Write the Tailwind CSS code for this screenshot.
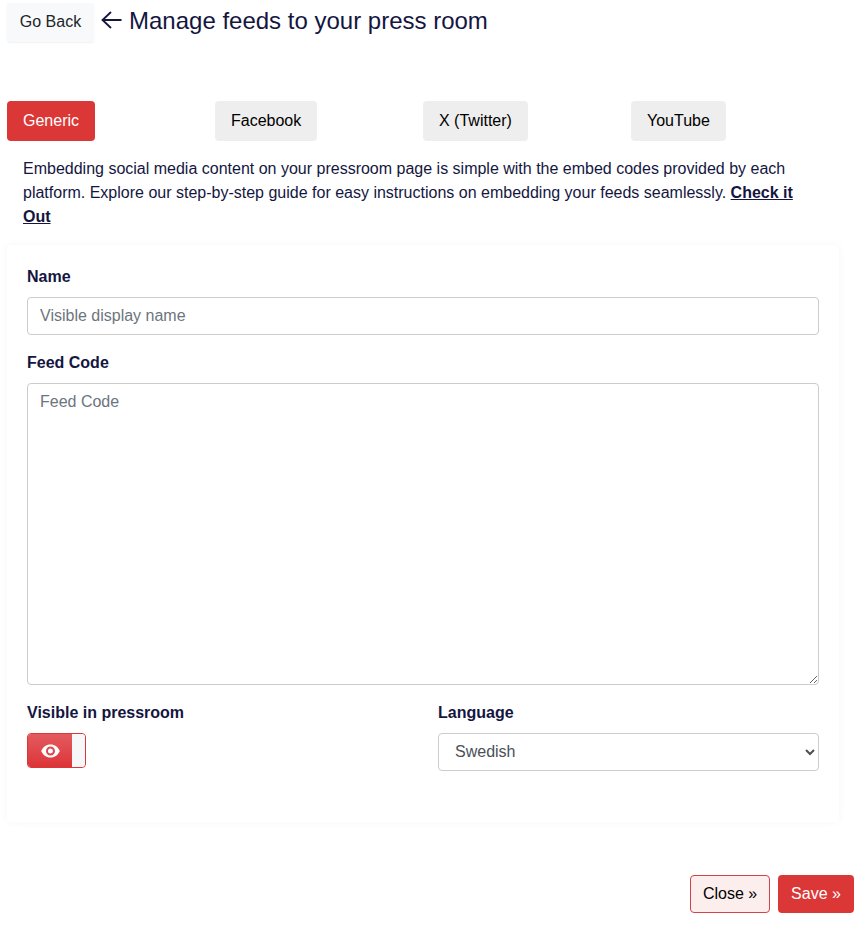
<!DOCTYPE html>
<html lang="en">
<head>
    <meta charset="UTF-8">
    <meta name="viewport" content="width=device-width, initial-scale=1.0">
    <title>Manage feeds</title>
    <script src="https://cdn.jsdelivr.net/npm/@tailwindcss/browser@4"></script>
</head>
<body class="bg-white text-[#14163f] font-['Liberation_Sans',Arial,sans-serif] h-[925px] overflow-hidden">

    <!-- header -->
    <div class="flex items-start pl-[7px] pt-[3px]">
        <button class="w-[87px] h-[39px] pb-[2px] bg-[#f8f9fa] rounded-[3px] shadow-[0_1px_2px_rgba(0,0,0,0.06)] text-[16px] text-[#212529]">Go Back</button>
        <svg class="ml-[7px] mt-[7px]" width="21" height="20" viewBox="0 0 21 20" fill="none" stroke="#14163f" stroke-width="1.8">
            <path d="M20.5 10H1.5M10 2L1.5 10L10 18"/>
        </svg>
        <h1 class="ml-[7px] text-[24px] leading-[36px]">Manage feeds to your press room</h1>
    </div>

    <!-- tabs -->
    <div class="grid grid-cols-4 w-[832px] ml-[7px] mt-[59px] text-[16px]">
        <div><button class="h-[40px] px-[16px] rounded-[4px] bg-[#dc3737] text-white">Generic</button></div>
        <div><button class="h-[40px] px-[16px] rounded-[4px] bg-[#eeeeee] text-black">Facebook</button></div>
        <div><button class="h-[40px] px-[16px] rounded-[4px] bg-[#eeeeee] text-black">X (Twitter)</button></div>
        <div><button class="h-[40px] px-[16px] rounded-[4px] bg-[#eeeeee] text-black">YouTube</button></div>
    </div>

    <p class="mt-[16px] ml-[23px] w-[800px] text-[16px] leading-[24px]">Embedding social media content on your pressroom page is simple with the embed codes provided by each platform. Explore our step-by-step guide for easy instructions on embedding your feeds seamlessly. <a href="#" class="font-bold underline">Check it Out</a></p>

    <!-- form card -->
    <div class="w-[832px] h-[577px] ml-[7px] mt-[16px] px-[20px] pt-[20px] rounded-[4px] shadow-[0_0_8px_rgba(0,0,0,0.04)]">
        <label class="block font-bold text-[16px] leading-[24px] mb-[8px]">Name</label>
        <input type="text" placeholder="Visible display name" class="block w-full h-[38px] px-[12px] text-[16px] border border-[#cccccc] rounded-[4px] placeholder:text-[#6c757d]">

        <label class="block font-bold text-[16px] leading-[24px] mt-[16px] mb-[8px]">Feed Code</label>
        <textarea placeholder="Feed Code" class="block w-full h-[302px] px-[12px] py-[6px] text-[16px] leading-[24px] border border-[#cccccc] rounded-[4px] placeholder:text-[#6c757d]"></textarea>

        <div class="flex mt-[16px]">
            <div class="w-[411px]">
                <label class="block font-bold text-[16px] leading-[24px] mb-[8px]">Visible in pressroom</label>
                <div class="flex w-[59px] h-[35px] rounded-[4px] border border-[#dc3737] overflow-hidden">
                    <div class="flex-1 flex items-center justify-center bg-gradient-to-b from-[#e35a5e] to-[#dc3338]">
                        <svg width="19" height="14" viewBox="0 0 19 14" fill="none">
                            <path fill-rule="evenodd" clip-rule="evenodd" fill="#ffffff" d="M9.5 0.5C5.2 0.5 1.7 3.2 0.2 7c1.5 3.8 5 6.5 9.3 6.5s7.8-2.7 9.3-6.5C17.3 3.2 13.8 0.500 9.500 0.500ZM9.500 11.500a4.500 4.500 0 1 1 0-9 4.500 4.500 0 0 1 0 9ZM9.500 4.500a2.500 2.500 0 1 0 0 5 2.500 2.500 0 0 0 0-5Z"/>
                        </svg>
                    </div>
                    <div class="w-[13px] bg-[#f6f7f9] rounded-[3px]"></div>
                </div>
            </div>
            <div class="w-[381px]">
                <label class="block font-bold text-[16px] leading-[24px] mb-[8px]">Language</label>
                <select class="block w-full h-[38px] pl-[12px] pb-[2px] text-[16px] text-[#495057] bg-white border border-[#cccccc] rounded-[4px]">
                    <option>Swedish</option>
                </select>
            </div>
        </div>
    </div>

    <!-- footer buttons -->
    <div class="flex justify-end gap-[8px] w-[854px] mt-[53px] text-[16px]">
        <button class="w-[80px] h-[38px] rounded-[4px] border border-[#d0444a] bg-[#fdeeee] text-black">Close »</button>
        <button class="w-[76px] h-[38px] rounded-[4px] bg-[#dc3737] text-white">Save »</button>
    </div>
</body>
</html>
